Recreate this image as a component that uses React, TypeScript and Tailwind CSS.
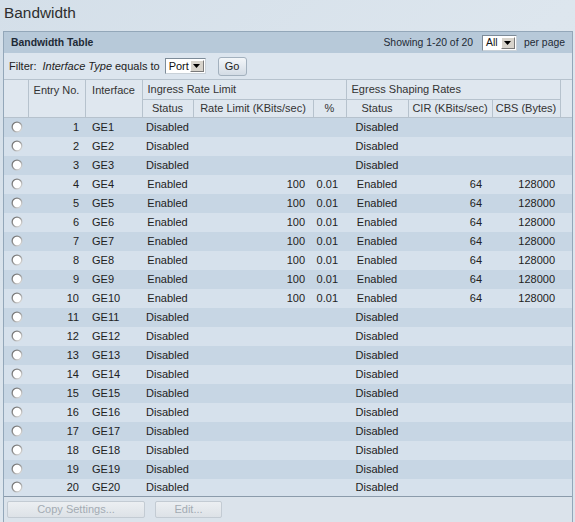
import React from "react";

const rows = Array.from({ length: 20 }, (_, i) => {
  const n = i + 1;
  return { n, en: n >= 4 && n <= 10 };
});

function Radio() {
  return (
    <svg width="12" height="12" viewBox="0 0 12 12" className="inline-block">
      <defs>
        <linearGradient id="rgb" x1="0" y1="0" x2="1" y2="1">
          <stop offset="0" stopColor="#5f5f5f" />
          <stop offset="0.5" stopColor="#9a9a9a" />
          <stop offset="1" stopColor="#f2f2f2" />
        </linearGradient>
      </defs>
      <circle cx="6" cy="6" r="5.5" fill="url(#rgb)" />
      <circle cx="6" cy="6" r="4.2" fill="#ffffff" />
    </svg>
  );
}

function SelectBox({ label, w }: { label: string; w: string }) {
  return (
    <div className={`flex items-stretch bg-white border border-[#7d8b98] border-r-[#c9d1d8] border-b-[#c9d1d8] h-[16px] ${w}`}>
      <span className="flex-1 pl-[3px] leading-[14px] text-[#111]">{label}</span>
      <span className="w-[14px] flex items-center justify-center bg-[#d8d4cc] border border-l-white border-t-white border-r-[#7a7a7a] border-b-[#7a7a7a] m-[1px]">
        <svg width="7" height="4" viewBox="0 0 7 4">
          <path d="M0 0 L7 0 L3.5 4 Z" fill="#000" />
        </svg>
      </span>
    </div>
  );
}

export default function App() {
  const hb = "border-[#b6c2cd]";
  return (
    <div className="w-[575px] h-[522px] overflow-hidden bg-gradient-to-br from-[#d4dfe9] via-[#dde6ee] to-[#dbe3eb] font-['Liberation_Sans',Arial,sans-serif] text-[#222]">
      <div className="h-[31px] pl-[4px] pt-[4px] text-[15.4px] leading-[18px] text-[#2e2e2e]">Bandwidth</div>
      <div className="ml-[3px] w-[570px] border-l border-r border-t border-[#93a7b9] h-[491px] flex flex-col">
        <div className="h-[21px] bg-[#b7c9d9] flex items-center pl-[7px] pr-[7px] text-[10.4px]">
          <span className="font-bold text-[#1e2a36]">Bandwidth Table</span>
          <span className="ml-auto text-[#1e2a36]">Showing 1-20 of 20</span>
          <div className="ml-[9px] mr-[7px] text-[10.4px]">
            <SelectBox label="All" w="w-[35px]" />
          </div>
          <span className="text-[#1e2a36]">per page</span>
        </div>
        <div className="h-[26px] bg-[#dce5ee] flex items-center pl-[5px] text-[11px] text-[#222]">
          <span>Filter:</span>
          <span className="italic ml-[6px]">Interface Type</span>
          <span className="ml-[3px]">equals to</span>
          <div className="ml-[5px]">
            <SelectBox label="Port" w="w-[41px]" />
          </div>
          <button className="ml-[12px] h-[19px] w-[29px] rounded-[3px] border border-[#a3b1be] bg-gradient-to-b from-[#f3f6f9] to-[#d3dce5] text-[11px] leading-none text-[#222]">
            Go
          </button>
        </div>
        <table className="w-[568px] table-fixed border-collapse text-[11px] leading-none">
          <colgroup>
            <col className="w-[24px]" />
            <col className="w-[57px]" />
            <col className="w-[57px]" />
            <col className="w-[51px]" />
            <col className="w-[120px]" />
            <col className="w-[33px]" />
            <col className="w-[62px]" />
            <col className="w-[84px]" />
            <col className="w-[68px]" />
            <col className="w-[12px]" />
          </colgroup>
          <thead className="bg-[#dfe7ef] text-[#333]">
            <tr className={`h-[20px] border-t ${hb}`}>
              <th rowSpan={2} className={`border-r ${hb} border-b`} />
              <th rowSpan={2} className={`border-r border-b ${hb} font-normal align-top pt-[5px] text-center`}>
                Entry No.
              </th>
              <th rowSpan={2} className={`border-r border-b ${hb} font-normal align-top pt-[5px] text-center`}>
                Interface
              </th>
              <th colSpan={3} className={`border-r border-b ${hb} font-normal text-left pl-[5px]`}>
                Ingress Rate Limit
              </th>
              <th colSpan={3} className={`border-r border-b ${hb} font-normal text-left pl-[5px]`}>
                Egress Shaping Rates
              </th>
              <th rowSpan={2} className={`border-b ${hb}`} />
            </tr>
            <tr className={`h-[18px] border-b ${hb}`}>
              <th className={`border-r ${hb} font-normal text-center`}>Status</th>
              <th className={`border-r ${hb} font-normal text-center`}>Rate Limit (KBits/sec)</th>
              <th className={`border-r ${hb} font-normal text-center`}>%</th>
              <th className={`border-r ${hb} font-normal text-center`}>Status</th>
              <th className={`border-r ${hb} font-normal text-center`}>CIR (KBits/sec)</th>
              <th className={`border-r ${hb} font-normal text-center`}>CBS (Bytes)</th>
            </tr>
          </thead>
          <tbody>
            {rows.map((r) => (
              <tr
                key={r.n}
                className={`${r.n === 20 ? "h-[17px]" : "h-[19px]"} ${r.n % 2 === 1 ? "bg-[#c7d6e4]" : "bg-[#d6e1ec]"}`}
              >
                <td className="text-center align-middle">
                  <span className="inline-flex relative top-[1px] left-[1px]">
                    <Radio />
                  </span>
                </td>
                <td className="text-right pr-[6px]">{r.n}</td>
                <td className="pl-[7px]">GE{r.n}</td>
                <td className="text-center">{r.en ? "Enabled" : "Disabled"}</td>
                <td className="text-right pr-[8px]">{r.en ? "100" : ""}</td>
                <td className="text-right pr-[8px]">{r.en ? "0.01" : ""}</td>
                <td className="text-center">{r.en ? "Enabled" : "Disabled"}</td>
                <td className="text-right pr-[10px]">{r.en ? "64" : ""}</td>
                <td className="text-right pr-[5px]">{r.en ? "128000" : ""}</td>
                <td />
              </tr>
            ))}
          </tbody>
        </table>
        <div className="flex-1 border-t border-[#8b9bab] bg-[#dbe3eb] flex items-start pt-[4px] pl-[3px] gap-[10px]">
          <button className="w-[138px] h-[17px] rounded-[2px] border border-[#c3cbd3] bg-gradient-to-b from-[#eceff2] to-[#dde2e7] text-[11px] leading-none text-[#a3abb3]">
            Copy Settings...
          </button>
          <button className="w-[67px] h-[17px] rounded-[2px] border border-[#c3cbd3] bg-gradient-to-b from-[#eceff2] to-[#dde2e7] text-[11px] leading-none text-[#a3abb3]">
            Edit...
          </button>
        </div>
      </div>
    </div>
  );
}
